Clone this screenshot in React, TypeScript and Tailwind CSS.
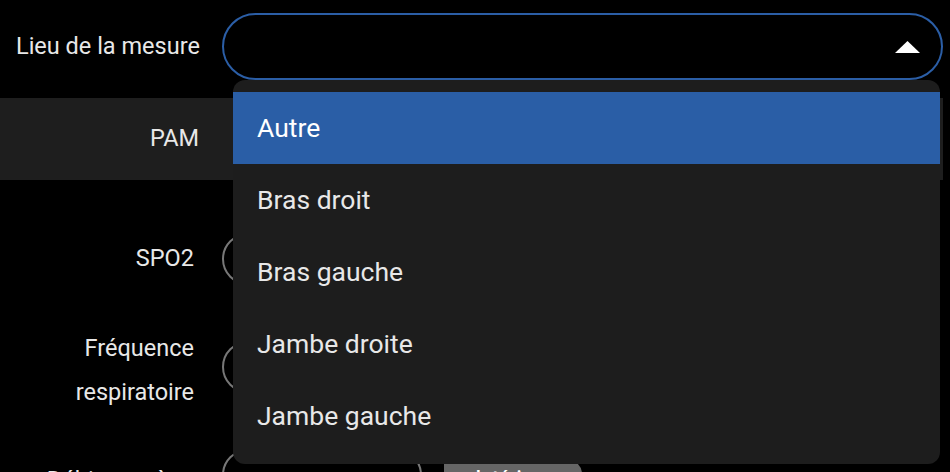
import { useState } from "react";

const options = ["Autre", "Bras droit", "Bras gauche", "Jambe droite", "Jambe gauche"];

export default function App() {
  const [selected, setSelected] = useState(0);

  return (
    <div
      className="relative w-[950px] h-[472px] overflow-hidden bg-black text-[#e8e8e8]"
      style={{ fontFamily: "Roboto, 'Noto Sans', sans-serif" }}
    >
      {/* Lieu de la mesure */}
      <div className="flex items-center pt-[13px] h-[80px]">
        <div className="w-[222px] pl-4 text-[23.5px]">Lieu de la mesure</div>
        <button className="flex h-[67px] w-[721px] items-center justify-end rounded-full border-2 border-[#2b5ea6] pr-[21px]">
          <svg width="25" height="12" viewBox="0 0 25 12">
            <polygon points="12.5,0 25,12 0,12" fill="#fff" />
          </svg>
        </button>
      </div>

      {/* PAM */}
      <div className="mt-[18px] flex h-[82px] w-[943px] items-center bg-[#1e1e1e]">
        <div className="w-[199px] text-right text-[23.5px]">PAM</div>
      </div>

      {/* SPO2 */}
      <div className="mt-[53px] flex h-[52px] items-center">
        <div className="w-[194px] text-right text-[23.5px]">SPO2</div>
        <div className="ml-[28px] h-[52px] w-[600px] rounded-full border-2 border-[#777]" />
      </div>

      {/* Fréquence respiratoire */}
      <div className="mt-[56px] flex h-[52px] items-center">
        <div className="w-[194px] pt-[6px] text-right text-[23.5px] leading-[44px]">
          Fréquence
          <br />
          respiratoire
        </div>
        <div className="ml-[28px] h-[52px] w-[600px] rounded-full border-2 border-[#777]" />
      </div>

      {/* Débit */}
      <div className="mt-[56px] flex h-[52px] items-start">
        <div className="w-[194px] pt-[9px] text-right text-[23.5px] leading-[44px]">Débit oxygène</div>
        <div className="ml-[28px] h-[52px] w-[200px] rounded-full border-2 border-[#777]" />
        <div className="ml-[22px] mt-[11px] flex h-[40px] w-[138px] justify-center rounded-tr-[14px] bg-[#666] pt-[3px] text-[20px] font-medium text-white">
          Intérieur
        </div>
      </div>

      {/* Dropdown menu */}
      <ul className="absolute left-[233px] top-[80px] w-[707px] rounded-xl bg-[#1d1d1d] py-3">
        {options.map((label, i) => (
          <li
            key={label}
            onClick={() => setSelected(i)}
            className={
              "flex h-[72px] items-center px-6 text-[26.5px] " +
              (i === selected ? "bg-[#2a5ea6] text-white" : "text-[#e8e8e8]")
            }
          >
            {label}
          </li>
        ))}
      </ul>
    </div>
  );
}
